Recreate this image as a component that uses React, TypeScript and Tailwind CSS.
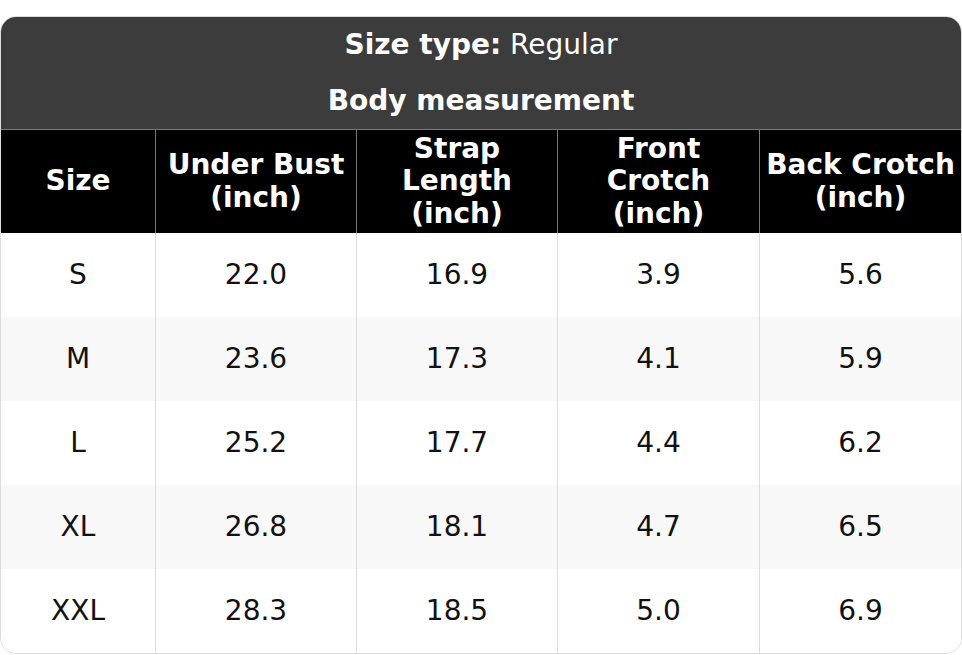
const columns = ['Size', 'Under Bust (inch)', 'Strap Length (inch)', 'Front Crotch (inch)', 'Back Crotch (inch)']

const rows = [
  ['S', '22.0', '16.9', '3.9', '5.6'],
  ['M', '23.6', '17.3', '4.1', '5.9'],
  ['L', '25.2', '17.7', '4.4', '6.2'],
  ['XL', '26.8', '18.1', '4.7', '6.5'],
  ['XXL', '28.3', '18.5', '5.0', '6.9'],
]

const grid = 'grid grid-cols-[154px_201px_201px_202px_1fr]'

export default function App() {
  return (
    <div className="bg-white pt-4 w-[962px] font-['DejaVu_Sans',sans-serif]">
      <div className="rounded-2xl overflow-hidden border border-[#dcdcdc] bg-white">
        {/* title */}
        <div className="bg-[#3c3c3c] text-white text-[28px] leading-[1.2] text-center border-b border-[#7a7a7a]">
          <div className="h-[56px] flex items-center justify-center">
            <span className="font-bold">Size type:</span>&nbsp;Regular
          </div>
          <div className="h-[56px] flex items-center justify-center font-bold">Body measurement</div>
        </div>

        {/* column headers */}
        <div className={`${grid} bg-black text-white font-bold text-[28px] leading-[32.5px] h-[103px]`}>
          {columns.map((c, i) => (
            <div key={c}
              className={`flex items-center justify-center text-center px-1 ${i > 0 ? 'border-l border-[#777]' : ''}`}>
              {c}
            </div>
          ))}
        </div>

        {/* rows */}
        {rows.map((r, ri) => (
          <div key={r[0]} className={`${grid} h-[84px] text-[28px] text-[#111] ${ri % 2 ? 'bg-[#f8f8f8]' : 'bg-white'}`}>
            {r.map((v, i) => (
              <div key={i}
                className={`flex items-center justify-center ${i > 0 ? 'border-l border-[#dddddd]' : ''}`}>
                {v}
              </div>
            ))}
          </div>
        ))}
      </div>
    </div>
  )
}
